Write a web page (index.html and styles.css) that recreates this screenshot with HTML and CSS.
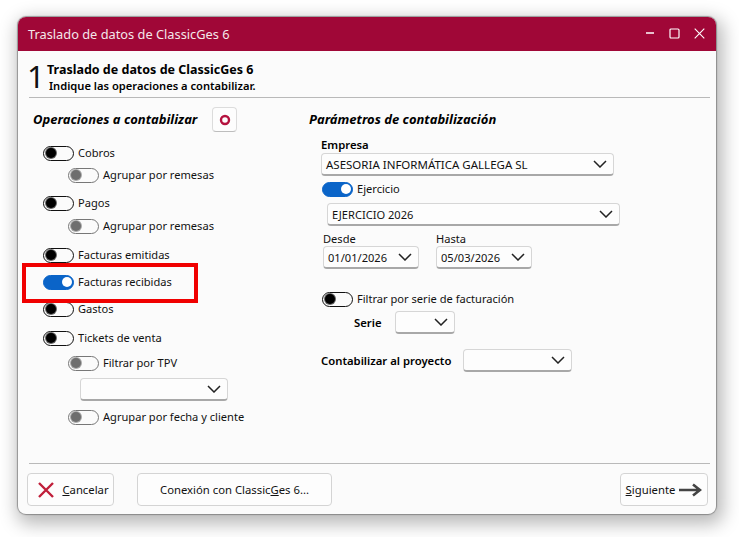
FILE: index.html
```html
<!DOCTYPE html>
<html lang="es">
<head>
<meta charset="utf-8">
<title>Traslado de datos de ClassicGes 6</title>
<link rel="stylesheet" href="styles.css">
</head>
<body>
<svg class="defs" width="0" height="0"><defs>
<symbol id="chev" viewBox="0 0 14 8"><path d="M1 1l6 6 6-6" fill="none" stroke="#222" stroke-width="1.5"/></symbol>
</defs></svg>
<div class="window">
  <div class="titlebar">
    <span class="title">Traslado de datos de ClassicGes 6</span>
    <div class="controls">
      <svg width="10" height="10" viewBox="0 0 10 10"><path d="M1 5h8" stroke="#fff" stroke-width="1.6"/></svg>
      <svg width="11" height="11" viewBox="0 0 11 11"><rect x="1" y="1" width="9" height="9" rx="1" fill="none" stroke="#fff" stroke-width="1.2"/></svg>
      <svg width="11" height="11" viewBox="0 0 11 11"><path d="M.7.7l9.6 9.6M10.3.7L.7 10.3" stroke="#fff" stroke-width="1.1"/></svg>
    </div>
  </div>
  <div class="wizard-head">
    <span class="step">1</span>
    <div class="head-text">
      <div class="head-title">Traslado de datos de ClassicGes 6</div>
      <div class="head-sub">Indique las operaciones a contabilizar.</div>
    </div>
  </div>
  <div class="columns">
    <section class="col-left">
      <div class="left-head">
        <h2 class="section">Operaciones a contabilizar</h2>
        <div class="mini-btn"><svg width="12" height="12" viewBox="0 0 12 12"><circle cx="6" cy="6" r="4" fill="none" stroke="#b5123f" stroke-width="2.4"/></svg></div>
      </div>
      <div class="opt m-cobros"><i class="tg"></i>Cobros</div>
      <div class="opt sub m6"><i class="tg off"></i>Agrupar por remesas</div>
      <div class="opt m-pagos"><i class="tg"></i>Pagos</div>
      <div class="opt sub m7"><i class="tg off"></i>Agrupar por remesas</div>
      <div class="opt m-em"><i class="tg"></i>Facturas emitidas</div>
      <div class="opt m-rec"><i class="tg on"></i>Facturas recibidas</div>
      <div class="opt m-rec"><i class="tg"></i>Gastos</div>
      <div class="opt m-tic"><i class="tg"></i>Tickets de venta</div>
      <div class="opt sub m-tpv"><i class="tg off"></i>Filtrar por TPV</div>
      <div class="sel sel-tpv"><span></span><svg class="chev"><use href="#chev"/></svg></div>
      <div class="opt sub m-fecha"><i class="tg off"></i>Agrupar por fecha y cliente</div>
    </section>
    <section class="col-right">
      <h2 class="section">Parámetros de contabilización</h2>
      <div class="label lab-emp">Empresa</div>
      <div class="sel sel-emp"><span>ASESORIA INFORMÁTICA GALLEGA SL</span><svg class="chev"><use href="#chev"/></svg></div>
      <div class="opt opt-ej"><i class="tg on"></i>Ejercicio</div>
      <div class="sel sel-ej"><span>EJERCICIO 2026</span><svg class="chev"><use href="#chev"/></svg></div>
      <div class="dates">
        <div class="date">
          <div class="date-lab">Desde</div>
          <div class="sel sel-date"><span>01/01/2026</span><svg class="chev"><use href="#chev"/></svg></div>
        </div>
        <div class="date">
          <div class="date-lab">Hasta</div>
          <div class="sel sel-date"><span>05/03/2026</span><svg class="chev"><use href="#chev"/></svg></div>
        </div>
      </div>
      <div class="opt opt-serie"><i class="tg"></i>Filtrar por serie de facturación</div>
      <div class="serie-row">
        <span class="label">Serie</span>
        <div class="sel sel-serie"><span></span><svg class="chev"><use href="#chev"/></svg></div>
      </div>
      <div class="proj-row">
        <span class="label">Contabilizar al proyecto</span>
        <div class="sel sel-proj"><span></span><svg class="chev"><use href="#chev"/></svg></div>
      </div>
    </section>
  </div>
  <div class="footer">
    <div class="btn btn-cancel">
      <svg width="16" height="16" viewBox="0 0 16 16"><path d="M1 1l14 14M15 1L1 15" stroke="#c01f3a" stroke-width="2.4"/></svg>
      <span><u>C</u>ancelar</span>
    </div>
    <div class="btn btn-conn"><span>Conexión con Classic<u>G</u>es 6...</span></div>
    <div class="btn btn-next">
      <span><u>S</u>iguiente</span>
      <svg width="24" height="14" viewBox="0 0 24 14"><path d="M1 7h20M15 1.5L22 7l-7 5.5" fill="none" stroke="#444" stroke-width="2.6"/></svg>
    </div>
  </div>
  <div class="highlight"></div>
</div>
</body>
</html>
```
FILE: styles.css
```css
* { box-sizing: border-box; }
html, body { margin: 0; height: 100%; background: #fff; }
body {
  padding: 17px 0 0 18px;
  font-family: "Noto Sans", "Open Sans", sans-serif;
  font-size: 11.1px;
  color: #111;
  overflow: hidden;
}
.defs { position: absolute; }
.window {
  position: relative;
  width: 698px;
  height: 497px;
  background: #fbfbfb;
  border-radius: 8px;
  box-shadow: 0 0 1px 1px rgba(90,90,90,.55), 3px 6px 18px 4px rgba(0,0,0,.28);
  display: flex;
  flex-direction: column;
  overflow: hidden;
}
.titlebar {
  height: 34px;
  flex: none;
  background: #a00737;
  color: #f4e6ea;
  display: flex;
  align-items: center;
  justify-content: space-between;
  padding: 0 11px 0 10px;
}
.title { font-size: 12.8px; }
.controls { display: flex; align-items: center; gap: 14px; margin-top: -2px; }
.controls svg { display: block; }
.wizard-head {
  height: 47px;
  margin: 0 6px 0 11px;
  border-bottom: 1px solid #b9b9b9;
  display: flex;
  flex: none;
  padding-top: 11px;
}
.step { font-size: 31px; line-height: 28px; width: 18px; margin-left: -2px; margin-right: 2px; font-weight: 400; color: #111; }
.head-title { font-weight: 700; font-size: 12.5px; line-height: 16px; color: #000; }
.head-sub { font-weight: 600; font-size: 11.15px; line-height: 15px; margin-left: 2px; color: #000; }
.columns { flex: 1; display: flex; min-height: 0; }
.col-left { width: 291px; padding: 9px 0 0 15px; flex: none; }
.left-head { display: flex; align-items: center; height: 25px; }
.left-head .section { padding-bottom: 2px; }
.section { margin: 0; font-size: 13px; line-height: 20px; font-style: italic; font-weight: 700; color: #000; }
.mini-btn {
  margin-left: 15px;
  width: 25px;
  height: 25px;
  border: 1px solid #dcdcdc;
  border-bottom-color: #bdbdbd;
  border-radius: 4px;
  background: #fdfdfd;
  display: flex;
  align-items: center;
  justify-content: center;
}
.opt { display: flex; align-items: center; height: 16px; line-height: 16px; padding-left: 10px; white-space: nowrap; }
.opt.sub { padding-left: 35px; }
.tg {
  position: relative;
  width: 31px;
  height: 15px;
  flex: none;
  margin-right: 4px;
  background: #fbfbfb;
  border: 1.3px solid #111;
  border-radius: 8px;
}
.tg::before {
  content: "";
  position: absolute;
  left: 2px;
  top: 1.2px;
  width: 10px;
  height: 10px;
  border-radius: 50%;
  background: #000;
  box-shadow: 0 0 0 1px #666;
}
.tg.off { border-color: #777; }
.tg.off::before { background: #6e6e6e; box-shadow: 0 0 0 1px #aaa; }
.tg.on { background: #0a64c8; border-color: #0a64c8; }
.tg.on::before { left: auto; right: 1.5px; background: #fff; box-shadow: none; }
.m-cobros { margin-top: 13px; }
.m6 { margin-top: 6px; }
.m-pagos { margin-top: 12px; }
.m7 { margin-top: 7px; }
.m-em { margin-top: 13px; }
.m-rec { margin-top: 11px; }
.m-tic { margin-top: 13px; }
.m-tpv { margin-top: 9px; }
.m-fecha { margin-top: 8px; }
.sel {
  display: flex;
  align-items: center;
  justify-content: space-between;
  height: 23px;
  padding: 0 6px 0 4px;
  background: #fdfdfd;
  border: 1px solid #d6d6d6;
  border-bottom: 2px solid #a8a8a8;
  border-radius: 4px;
  color: #111;
  white-space: nowrap;
}
.chev { width: 14px; height: 8px; flex: none; }
.sel-tpv { width: 148px; margin: 7px 0 0 47px; }
.col-right { flex: 1; padding: 11px 0 0 0; }
.label { font-weight: 600; color: #000; font-size: 11.3px; }
.lab-emp { margin: 8px 0 0 12px; line-height: 16px; }
.sel-emp { width: 293px; margin: 0 0 0 12px; font-size: 11.5px; }
.opt-ej { margin-top: 5px; padding-left: 13px; }
.sel-ej { width: 293px; margin: 6px 0 0 18px; }
.dates { display: flex; gap: 17px; margin: 5px 0 0 14px; }
.date-lab { line-height: 15px; height: 15px; }
.sel-date { width: 96px; margin-top: 0; }
.opt-serie { margin-top: 22px; padding-left: 13px; }
.serie-row { display: flex; align-items: center; margin: 4px 0 0 45px; }
.serie-row .label { width: 41px; }
.sel-serie { width: 60px; height: 23px; }
.proj-row { display: flex; align-items: center; margin: 15px 0 0 12px; }
.proj-row .label { width: 142px; }
.sel-proj { width: 109px; }
.footer {
  height: 51px;
  flex: none;
  margin: 0 6px 0 11px;
  border-top: 1px solid #b9b9b9;
  padding: 9px 2px 0 0;
  display: flex;
}
.btn {
  height: 33px;
  background: #fdfdfd;
  border: 1px solid #d4d4d4;
  border-radius: 4px;
  display: flex;
  align-items: center;
  justify-content: center;
  white-space: nowrap;
  font-size: 11.3px;
}
.btn-cancel { width: 87px; gap: 8px; margin-left: -2px; padding-left: 6px; }
.btn-conn { width: 195px; margin-left: 23px; }
.btn-next { width: 88px; margin-left: auto; gap: 3px; }
.highlight {
  position: absolute;
  left: 4px;
  top: 246px;
  width: 176px;
  height: 40px;
  border: 4px solid #f00000;
}
```
